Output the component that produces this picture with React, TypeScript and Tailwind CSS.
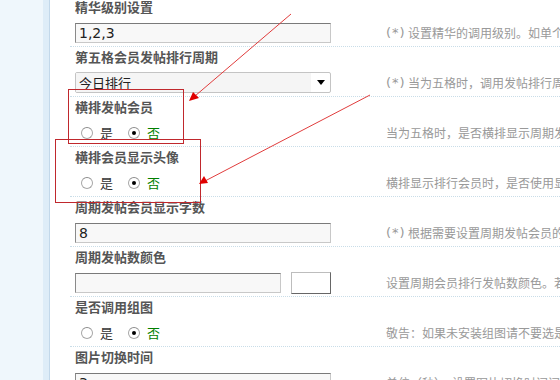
import React from "react";

const CJK = { fontFamily: '"Noto Sans CJK SC", "Liberation Sans", sans-serif' };

function TextBox({ value, w = "w-[256px]" }: { value: string; w?: string }) {
  return (
    <div
      className={`${w} h-[20px] border border-t-[#7a7a7a] border-l-[#8a8a8a] border-r-[#c8c8c8] border-b-[#c8c8c8] bg-[#f8f8f8] pl-[3px] text-[14px] leading-[18px] text-[#222]`}
      style={{ fontFamily: '"DejaVu Sans", "Noto Sans CJK SC", sans-serif' }}
    >
      {value}
    </div>
  );
}

function Radio({ checked }: { checked?: boolean }) {
  return (
    <span className="w-[12px] h-[12px] rounded-full border border-[#a8a8a8] border-t-[#8c8c8c] bg-white flex items-center justify-center">
      {checked && <span className="w-[4px] h-[4px] rounded-full bg-black" />}
    </span>
  );
}

function Radios() {
  return (
    <div className="flex items-center pl-[6px] text-[13px]" style={CJK}>
      <Radio />
      <span className="ml-[7px] text-[#333]">是</span>
      <span className="ml-[15px]">
        <Radio checked />
      </span>
      <span className="ml-[7px] text-[#008000]">否</span>
    </div>
  );
}

function Hint({ star, text }: { star?: boolean; text: string }) {
  return (
    <div className="flex-1 whitespace-nowrap overflow-hidden text-[12px] text-[#999] flex items-center" style={CJK}>
      {star && (
        <span className="inline-block w-[22px] text-[13px] tracking-[1px]" style={{ fontFamily: '"DejaVu Sans", sans-serif' }}>
          (*)
        </span>
      )}
      <span>{text}</span>
    </div>
  );
}

function Row({ label, control, hint }: { label: string; control: React.ReactNode; hint: React.ReactNode }) {
  return (
    <div className="h-[50px] border-b border-dotted border-[#c9dde8] pl-[5px] flex flex-col">
      <div className="h-[19px] leading-[19px] text-[13px] font-bold text-[#555] whitespace-nowrap" style={CJK}>
        {label}
      </div>
      <div className="mt-[7px] h-[20px] flex items-center">
        <div className="w-[311px] shrink-0 flex items-center">{control}</div>
        {hint}
      </div>
    </div>
  );
}

export default function App() {
  return (
    <div className="relative w-[560px] h-[380px] overflow-hidden bg-white flex">
      <div className="w-[50px] shrink-0 flex">
        <div className="w-[43px] bg-[#eff7fc]" />
        <div className="w-[6px] bg-[#deedf8]" />
        <div className="w-[1px] bg-[#c2d8ea]" />
      </div>
      <div className="flex-1 pl-[20px] -mt-[3px]">
        <Row label="精华级别设置" control={<TextBox value="1,2,3" />} hint={<Hint star text="设置精华的调用级别。如单个级别请直接填写" />} />
        <Row
          label="第五格会员发帖排行周期"
          control={
            <div className="w-[256px] h-[21px] -mt-[1px] border border-[#c4c4c4] rounded-[2px] flex bg-white">
              <div className="flex-1 bg-[#f5f5f5] pl-[3px] text-[13px] leading-[19px] text-[#222]" style={CJK}>
                今日排行
              </div>
              <div className="w-[19px] flex items-center justify-center">
                <svg width="8" height="5" viewBox="0 0 8 5">
                  <path d="M0 0 L8 0 L4 5 Z" fill="#000" />
                </svg>
              </div>
            </div>
          }
          hint={<Hint star text="当为五格时，调用发帖排行周期" />}
        />
        <Row label="横排发帖会员" control={<Radios />} hint={<Hint text="当为五格时，是否横排显示周期发帖会员" />} />
        <Row label="横排会员显示头像" control={<Radios />} hint={<Hint text="横排显示排行会员时，是否使用显示头像" />} />
        <Row label="周期发帖会员显示字数" control={<TextBox value="8" />} hint={<Hint star text="根据需要设置周期发帖会员的显示字数" />} />
        <Row
          label="周期发帖数颜色"
          control={
            <div className="flex items-center">
              <TextBox value="" w="w-[206px]" />
              <div className="ml-[10px] w-[40px] h-[22px] border border-t-[#bdbdbd] border-l-[#bdbdbd] border-r-[#666] border-b-[#666] bg-white" />
            </div>
          }
          hint={<Hint text="设置周期会员排行发帖数颜色。若不设置则为默认" />}
        />
        <Row label="是否调用组图" control={<Radios />} hint={<Hint text="敬告：如果未安装组图请不要选是" />} />
        <Row label="图片切换时间" control={<TextBox value="3" />} hint={<Hint text="单位（秒），设置图片切换时间间隔" />} />
      </div>

      {/* annotations */}
      <div className="absolute left-[68px] top-[89px] w-[116px] h-[55px] border border-[#c0282d]" />
      <div className="absolute left-[55px] top-[139px] w-[146px] h-[64px] border border-[#c0282d]" />
      <svg className="absolute left-0 top-0 pointer-events-none" width="560" height="380" viewBox="0 0 560 380">
        <line x1="291" y1="14" x2="195" y2="96" stroke="#e03c3c" strokeWidth="1" />
        <path d="M189 101 L193 92 L199 98 Z" fill="#e00000" />
        <line x1="370" y1="95" x2="205" y2="181" stroke="#e03c3c" strokeWidth="1" />
        <path d="M199 184 L204 176 L208 183 Z" fill="#e00000" />
      </svg>
    </div>
  );
}
